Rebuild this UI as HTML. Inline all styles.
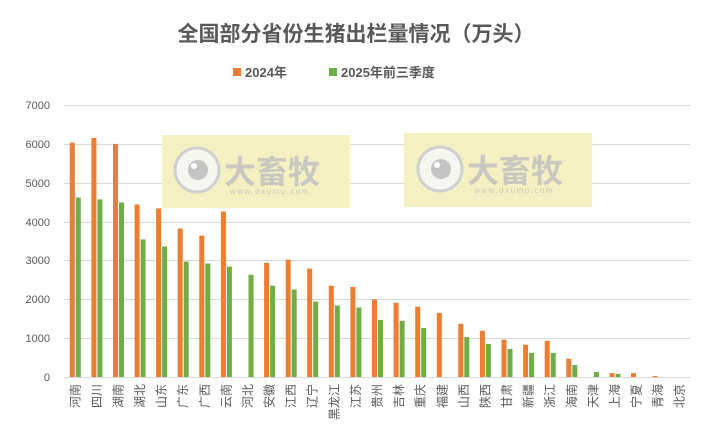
<!DOCTYPE html>
<html><head><meta charset="utf-8"><style>
html,body{margin:0;padding:0;background:#fff;}
svg{display:block;font-family:"Liberation Sans","Noto Sans CJK SC",sans-serif;}
</style></head><body>
<svg width="709" height="425" viewBox="0 0 709 425" xmlns="http://www.w3.org/2000/svg">
<rect width="709" height="425" fill="#fff"/>
<text x="356" y="41" text-anchor="middle" font-size="21" font-weight="bold" fill="#595959">全国部分省份生猪出栏量情况（万头）</text>
<rect x="233" y="68" width="8" height="8" fill="#ED7D31"/>
<text x="245" y="77" font-size="13" font-weight="bold" fill="#595959">2024年</text>
<rect x="329" y="68" width="8" height="8" fill="#70AD47"/>
<text x="341" y="77" font-size="13" font-weight="bold" fill="#595959">2025年前三季度</text>
<g stroke="#d9d9d9" stroke-width="1">
<line x1="64" x2="690" y1="105.5" y2="105.5"/><line x1="64" x2="690" y1="144.5" y2="144.5"/>
<line x1="64" x2="690" y1="183.5" y2="183.5"/><line x1="64" x2="690" y1="222.5" y2="222.5"/>
<line x1="64" x2="690" y1="260.5" y2="260.5"/><line x1="64" x2="690" y1="299.5" y2="299.5"/>
<line x1="64" x2="690" y1="338.5" y2="338.5"/><line x1="64" x2="690" y1="377.5" y2="377.5"/>
</g>
<g font-size="11" fill="#595959" text-anchor="end">
<text x="50" y="109">7000</text><text x="50" y="148">6000</text><text x="50" y="187">5000</text>
<text x="50" y="226">4000</text><text x="50" y="264">3000</text><text x="50" y="303">2000</text>
<text x="50" y="342">1000</text><text x="50" y="381">0</text>
</g>
<g>
<rect x="162" y="135" width="188" height="73" fill="#f3eebb" opacity="0.9"/>
<circle cx="197" cy="170" r="22" fill="#f6f6f0" stroke="#cfcfcf" stroke-width="3"/>
<circle cx="198" cy="170" r="10" fill="#c4c4c4"/>
<circle cx="194" cy="166" r="3" fill="#fff"/>
<text x="224" y="183" font-size="32" font-weight="bold" fill="#c8c8c0">大畜牧</text>
<text x="230" y="194" font-size="8" fill="#c8c8c0" letter-spacing="1.5">www.dxumu.com</text>
</g>
<g>
<rect x="404" y="133" width="188" height="74" fill="#f3eebb" opacity="0.9"/>
<circle cx="440" cy="169" r="22" fill="#f6f6f0" stroke="#cfcfcf" stroke-width="3"/>
<circle cx="441" cy="169" r="10" fill="#c4c4c4"/>
<circle cx="437" cy="165" r="3" fill="#fff"/>
<text x="467" y="182" font-size="32" font-weight="bold" fill="#c8c8c0">大畜牧</text>
<text x="474" y="193" font-size="8" fill="#c8c8c0" letter-spacing="1.5">www.dxumu.com</text>
</g>
<g fill="#ED7D31">
<rect x="69.8" y="142.7" width="5" height="234.3"/>
<rect x="91.4" y="138" width="5" height="239"/>
<rect x="113" y="143.9" width="5" height="233.1"/>
<rect x="134.6" y="204.5" width="5" height="172.5"/>
<rect x="156.1" y="208.4" width="5" height="168.6"/>
<rect x="177.7" y="228.6" width="5" height="148.4"/>
<rect x="199.3" y="235.6" width="5" height="141.4"/>
<rect x="220.9" y="211.5" width="5" height="165.5"/>
<rect x="264.1" y="262.8" width="5" height="114.2"/>
<rect x="285.7" y="259.7" width="5" height="117.3"/>
<rect x="307.2" y="268.6" width="5" height="108.4"/>
<rect x="328.8" y="285.7" width="5" height="91.3"/>
<rect x="350.4" y="286.9" width="5" height="90.1"/>
<rect x="372" y="299.3" width="5" height="77.7"/>
<rect x="393.6" y="302.8" width="5" height="74.2"/>
<rect x="415.2" y="306.7" width="5" height="70.3"/>
<rect x="436.8" y="312.9" width="5" height="64.1"/>
<rect x="458.3" y="323.8" width="5" height="53.2"/>
<rect x="479.9" y="330.8" width="5" height="46.2"/>
<rect x="501.5" y="339.7" width="5" height="37.3"/>
<rect x="523.1" y="344.7" width="5" height="32.3"/>
<rect x="544.7" y="340.9" width="5" height="36.1"/>
<rect x="566.3" y="358.7" width="5" height="18.3"/>
<rect x="609.5" y="373.1" width="5" height="3.9"/>
<rect x="631" y="373.1" width="5" height="3.9"/>
<rect x="652.6" y="376" width="5" height="1"/>
</g>
<g fill="#70AD47">
<rect x="75.8" y="197.5" width="5" height="179.5"/>
<rect x="97.4" y="199.4" width="5" height="177.6"/>
<rect x="119" y="202.5" width="5" height="174.5"/>
<rect x="140.6" y="239.4" width="5" height="137.6"/>
<rect x="162.1" y="246.4" width="5" height="130.6"/>
<rect x="183.7" y="261.6" width="5" height="115.4"/>
<rect x="205.3" y="263.5" width="5" height="113.5"/>
<rect x="226.9" y="266.6" width="5" height="110.4"/>
<rect x="248.5" y="274.8" width="5" height="102.2"/>
<rect x="270.1" y="285.7" width="5" height="91.3"/>
<rect x="291.7" y="289.6" width="5" height="87.4"/>
<rect x="313.2" y="301.6" width="5" height="75.4"/>
<rect x="334.8" y="305.5" width="5" height="71.5"/>
<rect x="356.4" y="307.4" width="5" height="69.6"/>
<rect x="378" y="319.9" width="5" height="57.1"/>
<rect x="399.6" y="320.7" width="5" height="56.3"/>
<rect x="421.2" y="328" width="5" height="49"/>
<rect x="464.3" y="337" width="5" height="40"/>
<rect x="485.9" y="344" width="5" height="33"/>
<rect x="507.5" y="349" width="5" height="28"/>
<rect x="529.1" y="352.9" width="5" height="24.1"/>
<rect x="550.7" y="352.9" width="5" height="24.1"/>
<rect x="572.3" y="365" width="5" height="12"/>
<rect x="593.9" y="371.9" width="5" height="5.1"/>
<rect x="615.5" y="373.9" width="5" height="3.1"/>
</g>
<g font-size="12" fill="#595959" text-anchor="end">
<text transform="translate(79.3,384) rotate(-90)">河南</text>
<text transform="translate(100.9,384) rotate(-90)">四川</text>
<text transform="translate(122.5,384) rotate(-90)">湖南</text>
<text transform="translate(144.1,384) rotate(-90)">湖北</text>
<text transform="translate(165.6,384) rotate(-90)">山东</text>
<text transform="translate(187.2,384) rotate(-90)">广东</text>
<text transform="translate(208.8,384) rotate(-90)">广西</text>
<text transform="translate(230.4,384) rotate(-90)">云南</text>
<text transform="translate(252,384) rotate(-90)">河北</text>
<text transform="translate(273.6,384) rotate(-90)">安徽</text>
<text transform="translate(295.2,384) rotate(-90)">江西</text>
<text transform="translate(316.7,384) rotate(-90)">辽宁</text>
<text transform="translate(338.3,384) rotate(-90)">黑龙江</text>
<text transform="translate(359.9,384) rotate(-90)">江苏</text>
<text transform="translate(381.5,384) rotate(-90)">贵州</text>
<text transform="translate(403.1,384) rotate(-90)">吉林</text>
<text transform="translate(424.7,384) rotate(-90)">重庆</text>
<text transform="translate(446.3,384) rotate(-90)">福建</text>
<text transform="translate(467.8,384) rotate(-90)">山西</text>
<text transform="translate(489.4,384) rotate(-90)">陕西</text>
<text transform="translate(511,384) rotate(-90)">甘肃</text>
<text transform="translate(532.6,384) rotate(-90)">新疆</text>
<text transform="translate(554.2,384) rotate(-90)">浙江</text>
<text transform="translate(575.8,384) rotate(-90)">海南</text>
<text transform="translate(597.4,384) rotate(-90)">天津</text>
<text transform="translate(619,384) rotate(-90)">上海</text>
<text transform="translate(640.5,384) rotate(-90)">宁夏</text>
<text transform="translate(662.1,384) rotate(-90)">青海</text>
<text transform="translate(683.7,384) rotate(-90)">北京</text>
</g>
</svg>
</body></html>
